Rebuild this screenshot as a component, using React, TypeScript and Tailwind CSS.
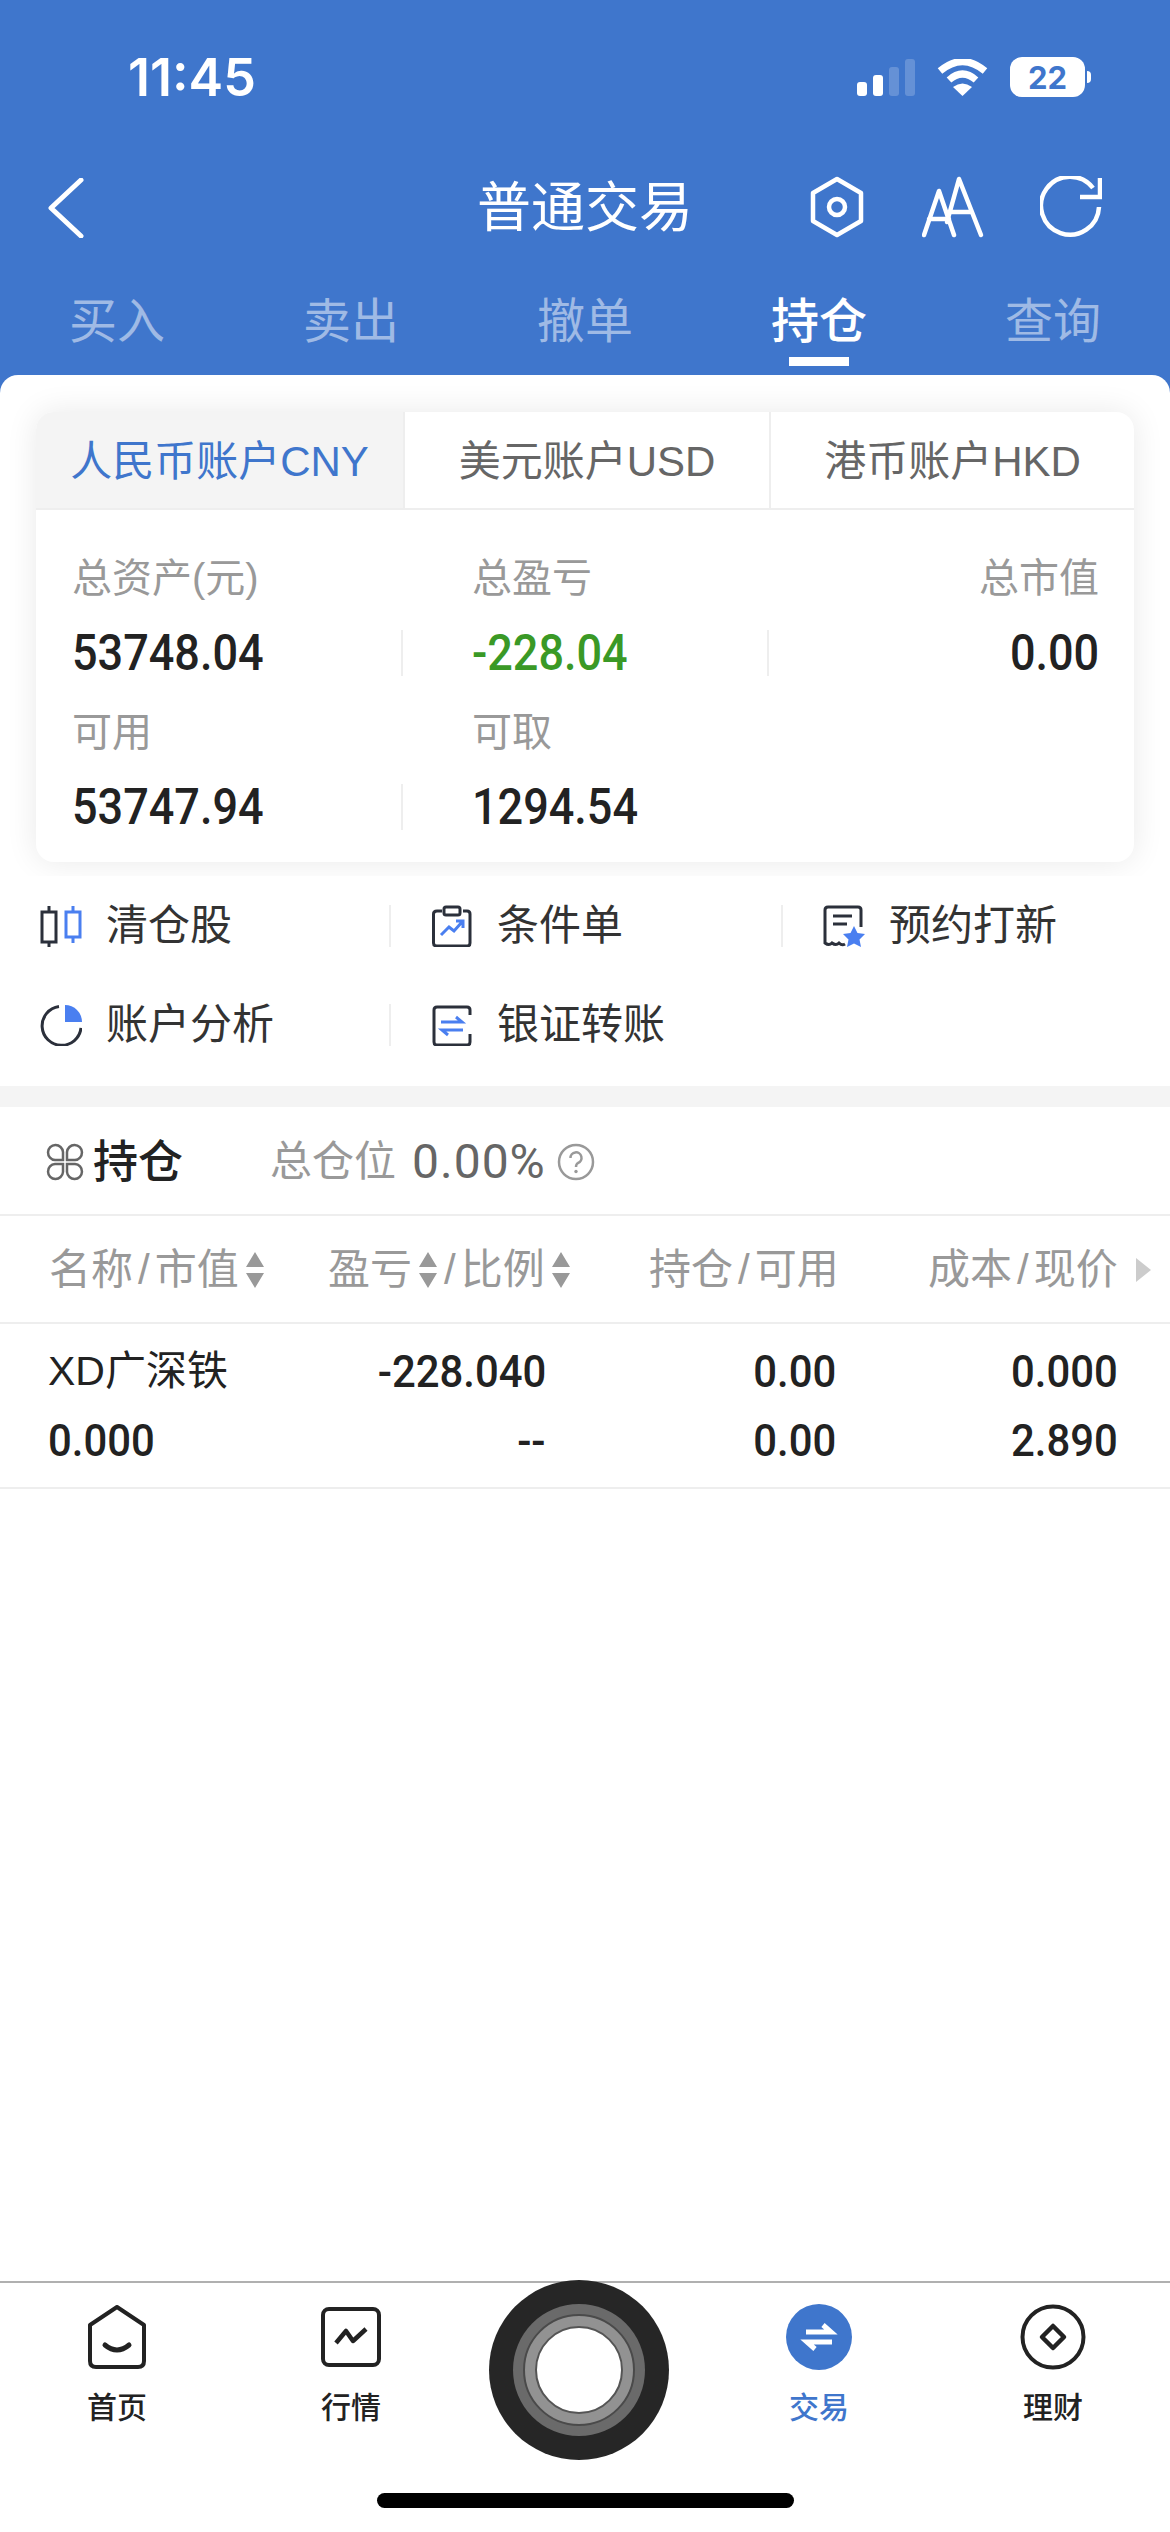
const tabs = ["买入", "卖出", "撤单", "持仓", "查询"];

function SortArrows() {
  return (
    <svg width="20" height="40" viewBox="0 0 20 40" className="shrink-0">
      <path d="M10 2 L19 17 H1 Z M1 23 H19 L10 38 Z" fill="#999999" />
    </svg>
  );
}

function Slash({ a, b }: { a?: string; b: string }) {
  return (
    <span>
      {a}
      <span className="mx-[5px]">/</span>
      {b}
    </span>
  );
}

function Stat({ label, value, color = "text-[#222222]", right = false, divider = false }: { label?: string; value?: string; color?: string; right?: boolean; divider?: boolean }) {
  return (
    <div className="flex flex-col">
      <div className={`h-[60px] flex items-center text-[40px] text-[#999999] ${right ? "justify-end" : ""}`}>{label}</div>
      <div className={`mt-[22px] mb-[26px] h-[46px] flex items-center ${right ? "justify-end" : ""} ${divider ? "border-r-2 border-[#eeeeee]" : ""}`}>
        <span className={`inline-block font-['Roboto',sans-serif] font-medium text-[50px] scale-x-[0.9] ${right ? "origin-right" : "origin-left"} ${color}`}>{value}</span>
      </div>
    </div>
  );
}

function Cell({ text, left = false }: { text: string; left?: boolean }) {
  return (
    <div>
      <span className={`inline-block scale-x-[0.93] ${left ? "origin-left" : "origin-right"}`}>{text}</span>
    </div>
  );
}

function QuickItem({ icon, text, divider = false }: { icon: React.ReactNode; text: string; divider?: boolean }) {
  return (
    <div className={`h-[42px] pl-[40px] flex items-center gap-[24px] ${divider ? "border-r-2 border-[#eeeeee]" : ""}`}>
      {icon}
      <span className="text-[42px] leading-none text-[#333333]">{text}</span>
    </div>
  );
}

const DARK = "#2b303b";
const ACCENT = "#4a7ff0";

function CandleIcon() {
  return (
    <svg width="42" height="42" viewBox="0 0 42 42" fill="none" strokeWidth="3">
      <path d="M2 7 H16 V37 H2 Z M9 1 V7 M9 37 V42" stroke={DARK} />
      <path d="M26 7 H40 V32 H26 Z M33 1 V7 M33 32 V38" stroke={ACCENT} />
    </svg>
  );
}

function PieIcon() {
  return (
    <svg width="42" height="42" viewBox="0 0 42 42" fill="none">
      <path d="M19 2.5 A19.5 19.5 0 1 0 41 24" stroke={DARK} strokeWidth="3" />
      <path d="M25 1 V18 H42 A17 17 0 0 0 25 1 Z" fill={ACCENT} />
    </svg>
  );
}

function ClipIcon() {
  return (
    <svg width="42" height="42" viewBox="0 0 42 42" fill="none" strokeWidth="3">
      <path d="M11 6 H6 Q2.5 6 2.5 9 V38 Q2.5 41 6 41 H36 Q39 41 39 38 V9 Q39 6 36 6 H32" stroke={DARK} />
      <rect x="13" y="2" width="16" height="8" rx="2" stroke={DARK} />
      <path d="M10 30 L18 22 L23 26 L31 17 M25 16 H32 V23" stroke={ACCENT} />
    </svg>
  );
}

function TicketIcon() {
  return (
    <svg width="42" height="42" viewBox="0 0 42 42" fill="none">
      <path d="M38 22 V5 Q38 2 35 2 H5 Q2 2 2 5 V38 Q6 41 9 38 Q13 41 16 38 Q19 41 22 39" stroke={DARK} strokeWidth="3" />
      <path d="M10 11 H29 M10 19 H24" stroke={DARK} strokeWidth="3" />
      <path d="M31 21 L34.5 28 L42 29 L36.5 34.500 L38 42 L31 38.500 L24 42 L25.500 34.500 L20 29 L27.500 28 Z" fill={ACCENT} />
    </svg>
  );
}

function SwapIcon() {
  return (
    <svg width="42" height="42" viewBox="0 0 42 42" fill="none" strokeWidth="3">
      <path d="M39 11 V6 Q39 3 36 3 H6 Q3 3 3 6 V38 Q3 41 6 41 H36 Q39 41 39 38 V30" stroke={DARK} />
      <path d="M10 18 H31 L25 13 M32 26 H11 L17 31" stroke={ACCENT} />
    </svg>
  );
}

function NavItem({ icon, label, active = false }: { icon: React.ReactNode; label: string; active?: boolean }) {
  return (
    <div className="flex flex-col items-center">
      <div className="h-[66px] flex items-center justify-center">{icon}</div>
      <span className={`mt-[19px] text-[30px] leading-[38px] font-medium ${active ? "text-[#3f76cc]" : "text-[#222222]"}`}>{label}</span>
    </div>
  );
}

export default function App() {
  return (
    <div className="w-[1170px] h-[2532px] flex flex-col bg-white font-['Liberation_Sans','Noto_Sans_CJK_SC',sans-serif] overflow-hidden">
      {/* blue header */}
      <div className="bg-[#3f76cc] h-[375px] shrink-0 text-white">
        <div className="h-[158px] pt-[48px] pl-[128px] pr-[79px] flex items-start justify-between">
          <span className="font-['Inter',sans-serif] font-semibold text-[52px] leading-[60px]">11:45</span>
          <div className="flex items-center h-[60px] gap-[22px] -mt-[1px]">
            <div className="flex items-end gap-[6px] h-[37px]">
              <div className="w-[10px] h-[14px] rounded-[3px] bg-white" />
              <div className="w-[10px] h-[21px] rounded-[3px] bg-white" />
              <div className="w-[10px] h-[29px] rounded-[3px] bg-white/20" />
              <div className="w-[10px] h-[37px] rounded-[3px] bg-white/20" />
            </div>
            <svg width="51" height="37" viewBox="0 0 51 37" fill="none">
              <path d="M3 12 Q25.500 -7 48 12" stroke="white" strokeWidth="7" />
              <path d="M12 21 Q25.500 9 39 21" stroke="white" strokeWidth="7" />
              <path d="M25.500 37 L16 28 Q25.500 21 35 28 Z" fill="white" />
            </svg>
            <div className="flex items-center gap-[2px]">
              <div className="w-[75px] h-[40px] rounded-[12px] bg-white flex items-center justify-center font-['Inter',sans-serif] font-bold text-[31px] leading-none text-[#3f76cc]">22</div>
              <div className="w-[4px] h-[12px] rounded-r-[4px] bg-white" />
            </div>
          </div>
        </div>
        <div className="h-[100px] pl-[48px] pr-[68px] flex items-center">
          <div className="flex-1">
            <svg width="36" height="60" viewBox="0 0 36 60" fill="none">
              <path d="M33 2 L3 30 L33 58" stroke="white" strokeWidth="5" strokeLinecap="round" strokeLinejoin="round" />
            </svg>
          </div>
          <div className="text-[54px] leading-none ml-[-60px] mr-[117px]">普通交易</div>
          <div className="flex items-center gap-[58px] -mt-[3px]">
            <svg width="54" height="62" viewBox="0 0 54 62" fill="none" stroke="white" strokeWidth="4.500" strokeLinejoin="round">
              <path d="M27 3 L51 17 V45 L27 59 L3 45 V17 Z" />
              <circle cx="27" cy="31" r="8" />
            </svg>
            <svg width="62" height="62" viewBox="0 0 62 62" fill="none" stroke="white" strokeWidth="4.500" strokeLinecap="round" strokeLinejoin="round" className="mr-[-2px]">
              <path d="M2 59 L17 15 L32 59 M7 43 H27" />
              <path d="M25 46 L37 3 L59 59 M29 36 H50" />
            </svg>
            <svg width="62" height="62" viewBox="0 0 62 62" fill="none" stroke="white" strokeWidth="4.500">
              <path d="M59 31 A29 29 0 1 1 53 12" />
              <path d="M60 2 V21 H40" />
            </svg>
          </div>
        </div>
        <div className="grid grid-cols-5 h-[117px]">
          {tabs.map((t, i) => (
            <div key={t} className="relative flex justify-center pt-[36px]">
              <span className={`text-[48px] leading-[56px] ${i === 3 ? "font-medium text-white" : "text-white/50"}`}>{t}</span>
              {i === 3 && <div className="absolute top-[99px] left-[87px] w-[60px] h-[9px] bg-white" />}
            </div>
          ))}
        </div>
      </div>

      {/* account card */}
      <div className="h-[501px] shrink-0 bg-[#3f76cc]">
        <div className="h-full bg-white rounded-t-[18px] overflow-hidden px-[36px] pt-[37px] pb-[15px]">
          <div className="rounded-[18px] bg-white shadow-[0_0_32px_rgba(0,0,0,0.09)] overflow-hidden">
            <div className="grid grid-cols-[367px_366px_365px] h-[98px] border-b-2 border-[#eeeeee] text-[42px]">
              <div className="bg-[#f4f4f4] flex items-center justify-center pt-[3px] text-[#3f76cc]">人民币账户CNY</div>
              <div className="border-l-2 border-[#eeeeee] flex items-center justify-center pt-[3px] text-[#666666]">美元账户USD</div>
              <div className="border-l-2 border-[#eeeeee] flex items-center justify-center pt-[3px] text-[#666666]">港币账户HKD</div>
            </div>
            <div className="pt-[38px] pb-[6px] grid grid-cols-[367px_366px_365px]">
              <div className="pl-[36px]"><Stat label="总资产(元)" value="53748.04" divider /></div>
              <div className="pl-[69px]"><Stat label="总盈亏" value="-228.04" color="text-[#3a9926]" divider /></div>
              <div className="pr-[35px]"><Stat label="总市值" value="0.00" right /></div>
              <div className="pl-[36px]"><Stat label="可用" value="53747.94" divider /></div>
              <div className="pl-[69px]"><Stat label="可取" value="1294.54" /></div>
            </div>
          </div>
        </div>
      </div>

      {/* quick actions */}
      <div className="grid grid-cols-[391px_392px_387px] gap-y-[57px] pt-[29px] pb-[40px] shrink-0">
        <QuickItem icon={<CandleIcon />} text="清仓股" divider />
        <QuickItem icon={<ClipIcon />} text="条件单" divider />
        <QuickItem icon={<TicketIcon />} text="预约打新" />
        <QuickItem icon={<PieIcon />} text="账户分析" divider />
        <QuickItem icon={<SwapIcon />} text="银证转账" />
      </div>
      <div className="h-[21px] bg-[#f4f4f4] shrink-0" />

      {/* positions */}
      <div className="h-[109px] shrink-0 border-b-2 border-[#eeeeee] pl-[46px] pt-[3px] flex items-center">
        <svg width="38" height="38" viewBox="0 0 38 38" fill="none" stroke="#666666" strokeWidth="2.500">
          <path d="M17 17 H9 A7.500 7.500 0 1 1 17 9 Z" />
          <path d="M21 17 V9 A7.500 7.500 0 1 1 29 17 Z" />
          <path d="M17 21 V29 A7.500 7.500 0 1 1 9 21 Z" />
          <path d="M21 21 H29 A7.500 7.500 0 1 1 21 29 Z" />
        </svg>
        <span className="ml-[9px] text-[45px] font-medium text-[#222222] leading-none">持仓</span>
        <span className="ml-[87px] text-[42px] text-[#999999] leading-none">总仓位</span>
        <span className="ml-[16px] font-['Roboto',sans-serif] text-[48px] tracking-[1px] text-[#666666] leading-none">0.00%</span>
        <svg width="38" height="38" viewBox="0 0 38 38" fill="none" className="ml-[11px]">
          <circle cx="19" cy="19" r="17" stroke="#999999" strokeWidth="2.500" />
          <path d="M13.500 15 A5.500 5.500 0 1 1 21 20 Q19 21 19 24" stroke="#999999" strokeWidth="2.500" />
          <circle cx="19" cy="28.500" r="1.700" fill="#999999" />
        </svg>
      </div>
      <div className="h-[108px] shrink-0 border-b-2 border-[#eeeeee] pl-[49px] pt-[1px] flex items-center text-[42px] text-[#999999] leading-none">
        <div className="w-[279px] flex items-center gap-[6px]"><Slash a="名称" b="市值" /><SortArrows /></div>
        <div className="w-[321px] flex items-center gap-[6px]">
          <span>盈亏</span><SortArrows /><span className="ml-[-5px]"><Slash b="比例" /></span><SortArrows />
        </div>
        <div className="w-[279px]"><Slash a="持仓" b="可用" /></div>
        <div className="flex items-center gap-[18px]">
          <Slash a="成本" b="现价" />
          <svg width="15" height="24" viewBox="0 0 15 24"><path d="M0 0 L15 12 L0 24 Z" fill="#cccccc" /></svg>
        </div>
      </div>
      <div className="h-[165px] shrink-0 border-b-2 border-[#eeeeee] pl-[48px] pt-[13px] grid grid-cols-[252px_246px_290px_282px] auto-rows-[69px] items-center text-right font-['Roboto',sans-serif] text-[45px] font-medium text-[#222222] leading-none">
        <div className="text-left font-['Liberation_Sans','Noto_Sans_CJK_SC',sans-serif] font-normal text-[41px]">XD广深铁</div>
        <Cell text="-228.040" />
        <Cell text="0.00" />
        <Cell text="0.000" />
        <div className="text-left"><Cell text="0.000" left /></div>
        <Cell text="--" />
        <Cell text="0.00" />
        <Cell text="2.890" />
      </div>

      <div className="flex-1" />

      {/* bottom nav */}
      <div className="relative h-[251px] shrink-0 border-t-2 border-[#b0b0b0] pt-[21px]">
        <div className="grid grid-cols-[234px_234px_234px_234px_234px]">
          <NavItem
            label="首页"
            icon={
              <svg width="60" height="64" viewBox="0 0 60 64" fill="none" stroke="#222222" strokeWidth="4" strokeLinejoin="round">
                <path d="M30 2 L57 20 V56 Q57 62 51 62 H9 Q3 62 3 56 V20 Z" />
                <path d="M18 40 Q30 50 42 40" strokeWidth="5" strokeLinecap="round" />
              </svg>
            }
          />
          <NavItem
            label="行情"
            icon={
              <svg width="60" height="60" viewBox="0 0 60 60" fill="none" stroke="#222222" strokeWidth="4" strokeLinejoin="round">
                <rect x="2" y="2" width="56" height="56" rx="6" />
                <path d="M15 36 L25 24 L32 34 L45 22" strokeWidth="4.500" />
              </svg>
            }
          />
          <div />
          <NavItem
            active
            label="交易"
            icon={
              <svg width="66" height="66" viewBox="0 0 66 66" fill="none">
                <circle cx="33" cy="33" r="33" fill="#3f76cc" />
                <path d="M20 28 H45 L37 21 M46 38 H21 L29 45" stroke="white" strokeWidth="5" />
              </svg>
            }
          />
          <NavItem
            label="理财"
            icon={
              <svg width="66" height="66" viewBox="0 0 66 66" fill="none" stroke="#222222" strokeWidth="4">
                <circle cx="33" cy="33" r="30.500" />
                <path d="M33 22 L44 33 L33 44 L22 33 Z" strokeWidth="4.500" strokeLinejoin="round" />
              </svg>
            }
          />
        </div>
        {/* floating centre button */}
        <div className="absolute top-[-3px] left-[489px] w-[180px] h-[180px] rounded-full bg-[#262626] flex items-center justify-center">
          <div className="w-[132px] h-[132px] rounded-full bg-[#6a6a6a] flex items-center justify-center">
            <div className="w-[112px] h-[112px] rounded-full bg-[#929292] border-2 border-[#4a4a4a] flex items-center justify-center">
              <div className="w-[88px] h-[88px] rounded-full bg-white border-2 border-[#555555]" />
            </div>
          </div>
        </div>
        <div className="absolute top-[210px] left-[377px] w-[417px] h-[15px] rounded-full bg-black" />
      </div>
    </div>
  );
}
